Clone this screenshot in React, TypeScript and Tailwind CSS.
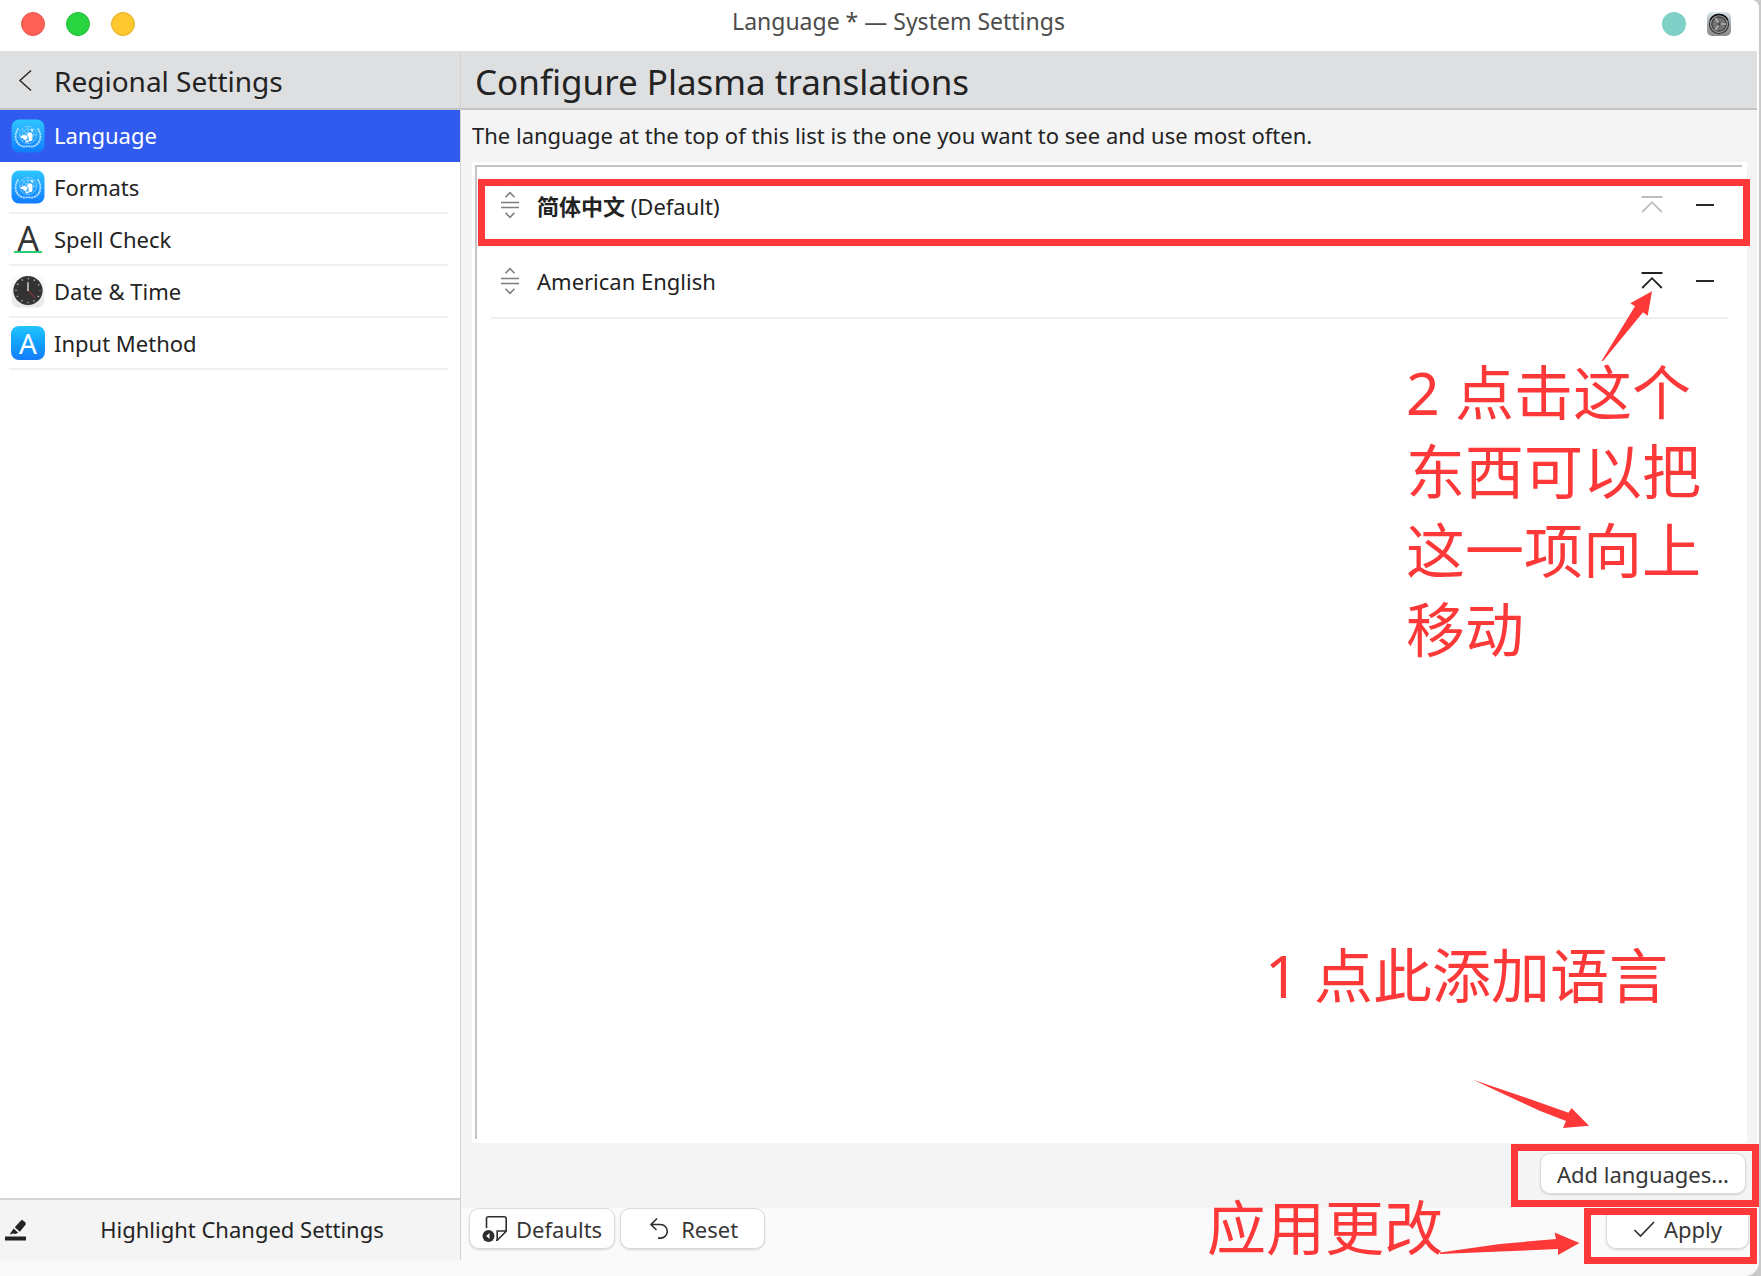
import type { ReactNode } from 'react'
import clsx from 'clsx'

const uiFont = "font-['Noto_Sans','Noto_Sans_CJK_SC',sans-serif]"

const UnIcon = () => (
  <svg viewBox="0 0 34 34" className="size-[34px]" aria-hidden="true">
    <defs>
      <linearGradient id="un-bg" x1="0" y1="0" x2="0" y2="1">
        <stop offset="0" stopColor="#2fc6ff" />
        <stop offset="1" stopColor="#0f7cff" />
      </linearGradient>
    </defs>
    <rect x="0.5" y="0.5" width="33" height="33" rx="7.5" fill="url(#un-bg)" />
    <g fill="none" stroke="#d3efff" strokeWidth="0.6" opacity="0.7">
      <circle cx="17" cy="16" r="8.6" />
      <circle cx="17" cy="16" r="5.8" />
      <circle cx="17" cy="16" r="3" />
      <path d="M17 7.4v17.2M8.4 16h17.2M11 10l12 12M23 10L11 22" />
    </g>
    <g fill="none" stroke="#d8f0ff" strokeWidth="1.8" strokeDasharray="2.2 0.5" opacity="0.8">
      <path d="M7.4 9.4C3 15 3.600 23.600 10.200 26.800c2.400 1.100 5 1.100 6.800.2" />
      <path d="M26.600 9.400c4.400 5.600 3.800 14.200-2.800 17.400-2.400 1.100-5 1.100-6.800.2" />
    </g>
    <g fill="#fff">
      <path d="M9.500 17.500l3-1.500 3 .5 1 2-1.500 2.500-2-.5-1-1.500-2 .2z" />
      <path d="M16.500 14.500l2-1 2.500.5.500 3-.5 4.500-2 1-1.500-1 .5-3-1.500-1.500z" />
      <path d="M19.500 9.500l2 .8 1 2.200-1.800-.4zM14 21.500l3 .3 1 1.200-3 .4z" />
    </g>
  </svg>
)

const SpellIcon = () => (
  <span
    aria-hidden="true"
    className="flex h-7 w-7 items-center justify-center border-b-2 border-[#2ecc71] text-[34px] leading-7 text-[#363636]"
  >
    A
  </span>
)

const ClockIcon = () => (
  <svg viewBox="0 0 34 34" className="size-[34px]" aria-hidden="true">
    <defs>
      <linearGradient id="clock-bg" x1="0" y1="0" x2="0" y2="1">
        <stop offset="0" stopColor="#fdfdfd" />
        <stop offset="1" stopColor="#e6e6e6" />
      </linearGradient>
    </defs>
    <rect x="0.5" y="0.5" width="33" height="33" rx="7.5" fill="url(#clock-bg)" />
    <circle cx="17" cy="16.5" r="14.6" fill="#333" />
    <circle
      cx="17"
      cy="16.5"
      r="12"
      fill="none"
      stroke="#b5b5b5"
      strokeWidth="1.7"
      strokeDasharray="1.2 5.083"
      strokeDashoffset="0.6"
    />
    <path d="M17 16.5l7.5 7.5" stroke="#b8403c" strokeWidth="0.9" />
    <path d="M17 17V8.3" stroke="#c9c9c9" strokeWidth="1.6" />
  </svg>
)

const InputIcon = () => (
  <span
    aria-hidden="true"
    className="flex size-[34px] items-center justify-center rounded-lg bg-linear-to-b from-[#23c4fc] to-[#167bfb] text-[28px] leading-none text-white"
  >
    A
  </span>
)

const GearIcon = () => (
  <svg viewBox="0 0 24 24" className="size-6" aria-hidden="true">
    <defs>
      <linearGradient id="gear-bg" x1="0" y1="0" x2="0" y2="1">
        <stop offset="0" stopColor="#dbeaf0" />
        <stop offset="0.5" stopColor="#a3a6a8" />
        <stop offset="1" stopColor="#8b8b8b" />
      </linearGradient>
    </defs>
    <rect width="24" height="24" rx="5" fill="url(#gear-bg)" />
    <circle cx="12" cy="12" r="9.6" fill="#9d9d9d" stroke="#3b3b3b" strokeWidth="1.2" />
    <path d="M3.2 8a9.8 9.8 0 0 1 17.6 0" fill="none" stroke="#111" strokeWidth="1.4" />
    <circle cx="12" cy="12" r="7.2" fill="#747474" stroke="#3d3d3d" strokeWidth="1.2" />
    <path d="M12.6 12H19M12 12L8.4 6M12 12l-3.6 6" stroke="#b4b4b4" strokeWidth="1.5" />
    <circle cx="12" cy="12" r="1.8" fill="#4a4a4a" />
  </svg>
)

const DragIcon = () => (
  <svg
    viewBox="0 0 20 28"
    className="h-7 w-5"
    fill="none"
    stroke="#7d7d7d"
    strokeWidth="1.6"
    aria-hidden="true"
  >
    <path d="M5.5 6.2L10 1.7l4.5 4.5M1 11.5h18M1 16.5h18M5.5 21.8l4.5 4.5 4.5-4.5" />
  </svg>
)

const MoveTopIcon = () => (
  <svg
    viewBox="0 0 22 20"
    className="h-5 w-[22px]"
    fill="none"
    stroke="currentColor"
    strokeWidth="1.8"
    aria-hidden="true"
  >
    <path d="M.5 2h21M1.2 17L11 7.2l9.8 9.8" />
  </svg>
)

const items: { label: string; icon: ReactNode }[] = [
  { label: 'Language', icon: <UnIcon /> },
  { label: 'Formats', icon: <UnIcon /> },
  { label: 'Spell Check', icon: <SpellIcon /> },
  { label: 'Date & Time', icon: <ClockIcon /> },
  { label: 'Input Method', icon: <InputIcon /> }
]

const languages = [
  {
    id: 'zh',
    name: (
      <>
        <span className="font-bold">简体中文</span> (Default)
      </>
    ),
    first: true
  },
  { id: 'en', name: <>American English</>, first: false }
]

const button =
  'flex h-[41px] items-center justify-center rounded-[10px] border border-[#dcdcdc] bg-white text-[#363636] shadow-[0_1px_2px_rgba(0,0,0,0.15)]'

const note =
  "pointer-events-none absolute text-[59px] leading-[79px] text-[#fc3838] font-['Noto_Sans','Noto_Sans_CJK_SC',sans-serif]"

const frame = 'pointer-events-none absolute border-[7px] border-[#fc3838]'

const TitleBar = () => (
  <header className="flex h-[51px] shrink-0 items-center pr-7 pb-1 pl-[21px]">
    <div className="flex gap-[21px]">
      <button aria-label="Close" className="size-6 rounded-full border border-[#e2574c] bg-[#ff6156]" />
      <button aria-label="Maximize" className="size-6 rounded-full border border-[#24bb38] bg-[#29d441]" />
      <button aria-label="Minimize" className="size-6 rounded-full border border-[#e0b02c] bg-[#fec82e]" />
    </div>
    <h1 className="flex-1 pb-1.5 text-center text-[23px] text-[#4c4c4c]">Language * — System Settings</h1>
    <div className="flex gap-[21px]">
      <button aria-label="Keep above" className="size-6 rounded-full bg-[#7fd0c7]" />
      <GearIcon />
    </div>
  </header>
)

const Sidebar = () => (
  <aside className="flex w-[461px] shrink-0 flex-col border-r border-[#d2d2d2] bg-white">
    <div className="flex h-[59px] items-center border-b-2 border-[#c2c3c4] bg-[#dedfe1] pl-4 text-[28px]">
      <button aria-label="Back" className="mr-[18px] flex h-6 w-5 items-center">
        <svg viewBox="0 0 20 24" className="h-6 w-5" fill="none" stroke="#2a2a2a" strokeWidth="1.5">
          <path d="M15 2.5l-11 10 11 10" />
        </svg>
      </button>
      <h2 className="pt-0.5">Regional Settings</h2>
    </div>
    <nav className="flex-1">
      {items.map((item, i) => (
        <a
          key={item.label}
          href="#"
          className={clsx('block', i === 0 ? 'bg-[#315bef] text-white' : 'pr-3 pl-[9px]')}
        >
          <span
            className={clsx(
              'flex h-[52px] items-center gap-[9px]',
              i === 0 ? 'pl-[11px]' : 'border-b-2 border-[#f0f0f0] pl-0.5'
            )}
          >
            <span className="flex w-[34px] justify-center">{item.icon}</span>
            <span className={clsx(i === 0 && 'pb-0.5')}>{item.label}</span>
          </span>
        </a>
      ))}
    </nav>
    <button className="flex h-[62px] items-center border-t-2 border-[#d4d4d4] bg-[#f4f4f4] pr-[18px] pl-[5px]">
      <svg viewBox="0 0 21 22" className="h-[22px] w-[21px]" fill="#232323" aria-hidden="true">
        <path d="M0 17.5h21v4H0zM17 .8l3.6 2.6v2.4l-5.8 7-5-4.6L16 1.4zM8.6 9.6l4.6 4.2-2.8 1.2-1.8-.4-4 .9z" />
      </svg>
      <span className="flex-1 pb-0.5 pl-4">Highlight Changed Settings</span>
    </button>
  </aside>
)

const LanguageList = () => (
  <section className="relative mr-[10px] ml-[11px] flex flex-1 flex-col bg-white pt-[3px] pr-[5px] pb-1 pl-[3px]">
    <ul className="flex-1 border-t-2 border-l-2 border-[#c3c3c3]">
      {languages.map((lang) => (
        <li key={lang.id} className="relative px-[14px]">
          <div
            className={clsx(
              'flex h-[76px] items-center pr-[14px] pl-[9px]',
              !lang.first && 'border-b-2 border-[#f0f0f0] pt-0.5'
            )}
          >
            <DragIcon />
            <span className={clsx('flex-1 pl-[17px]', lang.first && 'pt-0.5')}>{lang.name}</span>
            <button
              aria-label="Move to top"
              disabled={lang.first}
              className={clsx('mr-[33px]', lang.first ? 'text-[#bdbdbd]' : 'text-[#232323]')}
            >
              <MoveTopIcon />
            </button>
            <button aria-label="Remove" className="flex h-6 w-[18px] items-center">
              <span className="h-0.5 w-full bg-[#2a2a2a]" />
            </button>
          </div>
          {lang.first && <div className={`${frame} top-3 -right-2 -bottom-[3px] left-px`} />}
        </li>
      ))}
    </ul>

    <svg
      viewBox="0 0 52 72"
      className="pointer-events-none absolute top-[128px] right-[94px] h-[72px] w-[52px]"
      fill="#fc3838"
      aria-hidden="true"
    >
      <path d="M.5 71L34 16.3l-4.7-3L51 1.3l-4.3 24.4-4.7-3.4L2 71z" />
    </svg>
    <p className={`${note} top-[191px] right-[39px] w-[302px]`}>2 点击这个东西可以把这一项向上移动</p>

    <p className={`${note} right-[79px] bottom-[128px]`}>1 点此添加语言</p>
    <svg
      viewBox="0 0 116 50"
      className="pointer-events-none absolute right-[158px] bottom-[14px] h-[50px] w-[116px]"
      fill="#fc3838"
      aria-hidden="true"
    >
      <path d="M0 .8L61 21.5l34.5 12.2 3-4.7L116 46.7 90 49l3-7L66 31.5z" />
    </svg>
  </section>
)

const App = () => {
  return (
    <div
      className={`flex min-h-screen flex-col bg-[#c9c9c9] pr-[2px] text-[22px] leading-8 text-[#232323] ${uiFont}`}
    >
      <div className="flex flex-1 flex-col overflow-hidden rounded-tr-lg rounded-br-[14px] bg-[#f9f9f9]">
        <div className="bg-white">
          <TitleBar />
        </div>
        <div className="flex flex-1 pb-4">
          <Sidebar />
          <main className="flex min-w-0 flex-1 flex-col border-r-2 border-white bg-[#f4f4f4]">
            <h2 className="flex h-[59px] items-center border-b-2 border-[#c2c3c4] bg-[#dedfe1] pt-1 pl-[14px] text-[35px]">
              Configure Plasma translations
            </h2>
            <p className="flex h-[52px] items-center pb-0.5 pl-[11px]">
              The language at the top of this list is the one you want to see and use most often.
            </p>
            <LanguageList />
            <div className="flex h-[65px] items-start justify-end pt-[10px] pr-[11px]">
              <div className="relative">
                <button className={`${button} px-4`}>Add languages...</button>
                <div className={`${frame} -top-[9px] -right-[13px] -bottom-[13px] -left-[29px]`} />
              </div>
            </div>
            <footer className="flex h-[52px] items-start gap-[5px] bg-[#fafafa] px-2">
              <button className={`${button} gap-2 px-3`}>
                <svg
                  viewBox="0 0 26 28"
                  className="h-7 w-[26px]"
                  fill="none"
                  stroke="#2d2d2d"
                  strokeWidth="1.6"
                  aria-hidden="true"
                >
                  <path d="M4.5 13V3.8a2 2 0 0 1 2-2h15.7a2 2 0 0 1 2 2v12.4l-9 9H14M24 16h-8.8v9" />
                  <circle cx="6.5" cy="21" r="6" fill="#2d2d2d" stroke="none" />
                  <path d="M7.5 18v6L4.2 21z" fill="#fff" stroke="none" />
                </svg>
                Defaults
              </button>
              <button className={`${button} gap-2 px-[26px]`}>
                <svg
                  viewBox="0 0 26 26"
                  className="size-[26px]"
                  fill="none"
                  stroke="#2d2d2d"
                  strokeWidth="1.6"
                  aria-hidden="true"
                >
                  <path d="M10 2.5l-6 6 5.5 5.5M4 8.5h9.500a6.800 6.800 0 0 1 0 13.600H11" />
                </svg>
                Reset
              </button>
              <div className="relative ml-auto">
                <button className={`${button} gap-[9px] px-[26px]`}>
                  <svg
                    viewBox="0 0 22 20"
                    className="h-5 w-[22px]"
                    fill="none"
                    stroke="#2d2d2d"
                    strokeWidth="1.6"
                    aria-hidden="true"
                  >
                    <path d="M1.5 11l6 6L21 3" />
                  </svg>
                  Apply
                </button>
                <div className={`${frame} top-0 -right-2 -bottom-[15px] -left-[22px]`} />
                <svg
                  viewBox="0 0 140 24"
                  className="pointer-events-none absolute top-6 right-[169px] h-6 w-[140px]"
                  fill="#fc3838"
                  aria-hidden="true"
                >
                  <path d="M0 20.5L60 12l56-5-1.5-6.5L139.5 11 118 23v-6l-58 2.5L0 22z" />
                </svg>
                <p className={`${note} -top-5 right-[306px] whitespace-nowrap`}>应用更改</p>
              </div>
            </footer>
          </main>
        </div>
      </div>
    </div>
  )
}

export default App
